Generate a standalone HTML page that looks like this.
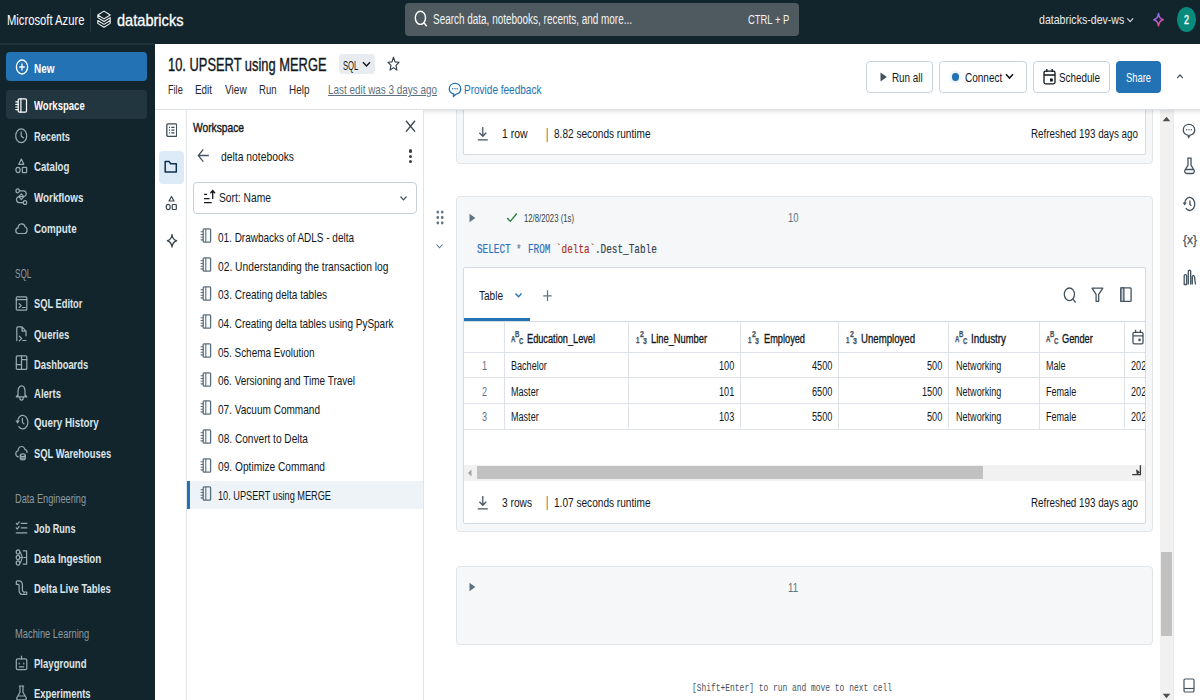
<!DOCTYPE html>
<html lang="en"><head><meta charset="utf-8"><title>10. UPSERT using MERGE - Databricks</title>
<style>
html,body{margin:0;padding:0}
body{width:1200px;height:700px;overflow:hidden;position:relative;background:#fff;font-family:"Liberation Sans",sans-serif}
.b{position:absolute;box-sizing:border-box;display:block}
.t{position:absolute;white-space:nowrap;line-height:1;transform-origin:0 0;display:block}
</style></head><body>
<div class="b" style="left:0px;top:0px;width:1200px;height:44px;background:#12252d;"></div>
<div class="b" style="left:0px;top:44px;width:155px;height:656px;background:#12252d;"></div>
<div class="b" style="left:0px;top:43.4px;width:155px;height:1.2px;background:#203239;"></div>
<span class="t" style="left:7.00px;top:11.68px;font-size:15.5px;transform:scaleX(0.7256);color:#fff;">Microsoft Azure</span>
<div class="b" style="left:89.6px;top:7.5px;width:1.2px;height:24.5px;background:#283940;"></div>
<svg class="b" style="left:97.4px;top:9.9px;" width="14" height="19.6" viewBox="0 0 14 19.6" fill="none"><path d="M.8 5 7 1.1l6.2 3.9L7 8.9zM.8 5v2.6L7 11.5l6.2-3.9v2.9L7 14.4.8 10.5v2.9L7 17.3l6.2-3.9v-2.8" stroke="#eef1f3" stroke-width="1.1" stroke-linejoin="round"/></svg>
<span class="t" style="left:117.10px;top:11.61px;font-size:17px;transform:scaleX(0.8583);color:#fff;-webkit-text-stroke:0.3px #fff;">databricks</span>
<div class="b" style="left:405px;top:3px;width:393.5px;height:33px;background:#4e5a60;border-radius:4px;"></div>
<svg class="b" style="left:414px;top:9.5px;" width="14" height="18" viewBox="0 0 14 18" fill="none"><ellipse cx="6.4" cy="7.8" rx="5.1" ry="6.6" stroke="#fff" stroke-width="1.4"/><path d="M10 12.8 12.7 16.3" stroke="#fff" stroke-width="1.4"/></svg>
<span class="t" style="left:432.70px;top:12.15px;font-size:14px;transform:scaleX(0.7103);color:#f2f4f5;">Search data, notebooks, recents, and more...</span>
<span class="t" style="left:747.70px;top:12.87px;font-size:13.5px;transform:scaleX(0.6983);color:#f2f4f5;">CTRL + P</span>
<span class="t" style="left:1038.70px;top:13.00px;font-size:13px;transform:scaleX(0.8143);color:#e8ecef;">databricks-dev-ws</span>
<svg class="b" style="left:1126px;top:17px;" width="8" height="7" viewBox="0 0 8 7" fill="none"><path d="M1.3 1.3 4.2 4.6 7.1 1.3" stroke="#d5dce0" stroke-width="1.2"/></svg>
<svg class="b" style="left:1152px;top:12px;" width="13" height="16" viewBox="0 0 13 16" fill="none"><defs><linearGradient id="sg" x1="0.2" y1="0" x2=".8" y2="1"><stop offset="0" stop-color="#6d86f2"/><stop offset=".5" stop-color="#c14fd6"/><stop offset="1" stop-color="#f5525f"/></linearGradient></defs><path d="M6.5 1.6C7 5.3 8.2 6.9 11.2 7.7 8.2 8.5 7 10.1 6.5 13.8 6 10.1 4.8 8.5 1.8 7.7 4.8 6.9 6 5.3 6.5 1.6z" stroke="url(#sg)" stroke-width="1.5" stroke-linejoin="round"/></svg>
<div class="b" style="left:1176.8px;top:7.1px;width:19.5px;height:25px;background:#088b7d;border-radius:50%"></div>
<span class="t" style="left:1184.20px;top:13.52px;font-size:12.5px;transform:scaleX(0.7193);color:#fff;-webkit-text-stroke:0.4px #fff;">2</span>
<div class="b" style="left:6px;top:52px;width:141px;height:29px;background:#2272b4;border-radius:4px;"></div>
<svg class="b" style="left:15px;top:59px;" width="14" height="16" viewBox="0 0 14 16" fill="none"><ellipse cx="7" cy="8" rx="5.6" ry="7" stroke="#fff" stroke-width="1.3"/><path d="M7 4.6v6.8M4.2 8h5.6" stroke="#fff" stroke-width="1.3"/></svg>
<span class="t" style="left:33.70px;top:62.00px;font-size:13px;transform:scaleX(0.7669);color:#fff;font-weight:bold;">New</span>
<div class="b" style="left:6px;top:90px;width:141px;height:29px;background:#22363f;border-radius:4px;"></div>
<span class="t" style="left:33.80px;top:98.80px;font-size:13px;transform:scaleX(0.7335);color:#fff;font-weight:bold;">Workspace</span>
<span class="t" style="left:33.80px;top:129.70px;font-size:13px;transform:scaleX(0.7118);color:#dde4e8;font-weight:bold;">Recents</span>
<span class="t" style="left:33.80px;top:160.30px;font-size:13px;transform:scaleX(0.7426);color:#dde4e8;font-weight:bold;">Catalog</span>
<span class="t" style="left:33.80px;top:190.80px;font-size:13px;transform:scaleX(0.7543);color:#dde4e8;font-weight:bold;">Workflows</span>
<span class="t" style="left:33.80px;top:221.70px;font-size:13px;transform:scaleX(0.7563);color:#dde4e8;font-weight:bold;">Compute</span>
<span class="t" style="left:33.80px;top:297.30px;font-size:13px;transform:scaleX(0.7154);color:#dde4e8;font-weight:bold;">SQL Editor</span>
<span class="t" style="left:33.80px;top:327.80px;font-size:13px;transform:scaleX(0.7271);color:#dde4e8;font-weight:bold;">Queries</span>
<span class="t" style="left:33.80px;top:357.50px;font-size:13px;transform:scaleX(0.7214);color:#dde4e8;font-weight:bold;">Dashboards</span>
<span class="t" style="left:33.80px;top:387.00px;font-size:13px;transform:scaleX(0.7327);color:#dde4e8;font-weight:bold;">Alerts</span>
<span class="t" style="left:33.80px;top:416.10px;font-size:13px;transform:scaleX(0.7537);color:#dde4e8;font-weight:bold;">Query History</span>
<span class="t" style="left:33.80px;top:447.00px;font-size:13px;transform:scaleX(0.7220);color:#dde4e8;font-weight:bold;">SQL Warehouses</span>
<span class="t" style="left:33.80px;top:522.10px;font-size:13px;transform:scaleX(0.7008);color:#dde4e8;font-weight:bold;">Job Runs</span>
<span class="t" style="left:33.80px;top:551.60px;font-size:13px;transform:scaleX(0.7514);color:#dde4e8;font-weight:bold;">Data Ingestion</span>
<span class="t" style="left:33.80px;top:581.70px;font-size:13px;transform:scaleX(0.7288);color:#dde4e8;font-weight:bold;">Delta Live Tables</span>
<span class="t" style="left:33.80px;top:656.50px;font-size:13px;transform:scaleX(0.7342);color:#dde4e8;font-weight:bold;">Playground</span>
<span class="t" style="left:33.80px;top:687.10px;font-size:13px;transform:scaleX(0.7254);color:#dde4e8;font-weight:bold;">Experiments</span>
<span class="t" style="left:14.80px;top:267.84px;font-size:12px;transform:scaleX(0.6830);color:#8d9aa1;">SQL</span>
<span class="t" style="left:14.80px;top:493.14px;font-size:12px;transform:scaleX(0.7657);color:#8d9aa1;">Data Engineering</span>
<span class="t" style="left:14.80px;top:628.44px;font-size:12px;transform:scaleX(0.7778);color:#8d9aa1;">Machine Learning</span>
<div class="b" style="left:155px;top:44px;width:1045px;height:66px;background:#fff;border-bottom:1px solid #dce2e8;z-index:5"></div>
<div class="b" style="left:424px;top:110px;width:776px;height:5px;background:linear-gradient(rgba(0,0,0,.10),rgba(0,0,0,.03) 60%,rgba(0,0,0,0));z-index:5"></div>
<div class="b" style="left:0;top:0;z-index:6">
<span class="t" style="left:167.50px;top:57.19px;font-size:17.5px;transform:scaleX(0.7363);color:#11171c;-webkit-text-stroke:0.35px #11171c;">10. UPSERT using MERGE</span>
<div class="b" style="left:339px;top:54px;width:36px;height:20px;background:#e8ecf0;border-radius:4px;"></div>
<span class="t" style="left:343.00px;top:59.54px;font-size:12px;transform:scaleX(0.6372);color:#11171c;">SQL</span>
<svg class="b" style="left:362px;top:61px;" width="9" height="7" viewBox="0 0 9 7" fill="none"><path d="M1 1.3 4.5 5 8 1.3" stroke="#11171c" stroke-width="1.4"/></svg>
<svg class="b" style="left:387.4px;top:56.3px;" width="13" height="15.5" viewBox="0 0 13 15.5" fill="none"><path d="M6.5 1.3 8 5.9l4 .4-3 3.1.9 4.7-3.4-2.5-3.4 2.5.9-4.7-3-3.1 4-.4z" stroke="#333f48" stroke-width="1.150" stroke-linejoin="round"/></svg>
<span class="t" style="left:167.50px;top:83.00px;font-size:13px;transform:scaleX(0.7018);color:#1f272d;">File</span>
<span class="t" style="left:195.30px;top:83.00px;font-size:13px;transform:scaleX(0.7589);color:#1f272d;">Edit</span>
<span class="t" style="left:224.80px;top:83.00px;font-size:13px;transform:scaleX(0.7766);color:#1f272d;">View</span>
<span class="t" style="left:259.00px;top:83.00px;font-size:13px;transform:scaleX(0.7338);color:#1f272d;">Run</span>
<span class="t" style="left:289.30px;top:83.00px;font-size:13px;transform:scaleX(0.7631);color:#1f272d;">Help</span>
<span class="t" style="left:328.00px;top:83.00px;font-size:13px;transform:scaleX(0.7618);color:#5f7281;text-decoration:underline;">Last edit was 3 days ago</span>
<svg class="b" style="left:447.5px;top:81.8px;" width="14" height="16" viewBox="0 0 14 16" fill="none"><path d="M7 1.3c3.3 0 5.7 2.4 5.7 5.5 0 2.8-2 5-4.7 5.4L5.4 14.6l.3-2.6C3.2 11.4 1.3 9.4 1.3 6.8c0-3.1 2.4-5.5 5.7-5.5z" stroke="#2272b4" stroke-width="1.3" stroke-linejoin="round"/><circle cx="4.7" cy="6.8" r=".75" fill="#2272b4"/><circle cx="7" cy="6.8" r=".75" fill="#2272b4"/><circle cx="9.3" cy="6.8" r=".75" fill="#2272b4"/></svg>
<span class="t" style="left:464.30px;top:83.00px;font-size:13px;transform:scaleX(0.7705);color:#2272b4;">Provide feedback</span>
<div class="b" style="left:866px;top:60.6px;width:67px;height:32.6px;background:#fff;border:1px solid #c9d3dc;border-radius:4px;"></div>
<svg class="b" style="left:880px;top:72.4px;" width="8" height="10" viewBox="0 0 8 10" fill="none"><path d="M.5.6 6.9 5 .5 9.4z" fill="#44535f"/></svg>
<span class="t" style="left:892.30px;top:70.50px;font-size:13px;transform:scaleX(0.7587);color:#11171c;">Run all</span>
<div class="b" style="left:939px;top:60.6px;width:88px;height:32.6px;background:#fff;border:1px solid #c9d3dc;border-radius:4px;"></div>
<div class="b" style="left:952.4px;top:73.4px;width:6.4px;height:7.3px;background:#2272b4;border-radius:50%;box-shadow:0 0 0 2.5px #f0f5fa"></div>
<span class="t" style="left:965.20px;top:70.50px;font-size:13px;transform:scaleX(0.7704);color:#11171c;">Connect</span>
<svg class="b" style="left:1005px;top:73px;" width="9" height="7" viewBox="0 0 9 7" fill="none"><path d="M1 1.3 4.5 5 8 1.3" stroke="#11171c" stroke-width="1.6"/></svg>
<div class="b" style="left:1033px;top:60.6px;width:77px;height:32.6px;background:#fff;border:1px solid #c9d3dc;border-radius:4px;"></div>
<svg class="b" style="left:1043px;top:68px;" width="13" height="17" viewBox="0 0 13 17" fill="none"><rect x="1" y="3.2" width="11" height="12.6" rx="1.5" stroke="#11171c" stroke-width="1.3"/><path d="M1 7h11M3.8 1v3M9.2 1v3" stroke="#11171c" stroke-width="1.3"/><rect x="7" y="10.5" width="2.8" height="3" fill="#11171c"/></svg>
<span class="t" style="left:1059.00px;top:70.50px;font-size:13px;transform:scaleX(0.7564);color:#11171c;">Schedule</span>
<div class="b" style="left:1116.2px;top:60.6px;width:45px;height:32.6px;background:#2272b4;border-radius:4px;"></div>
<span class="t" style="left:1126.00px;top:70.50px;font-size:13px;transform:scaleX(0.7207);color:#fff;">Share</span>
<svg class="b" style="left:1175px;top:73px;" width="10" height="7" viewBox="0 0 10 7" fill="none"><path d="M2.2 5.2 5 2 7.8 5.2" stroke="#44535f" stroke-width="1.2"/></svg>
</div>
<div class="b" style="left:186.2px;top:109px;width:1px;height:591px;background:#dfe4e8;"></div>
<div class="b" style="left:159px;top:150.5px;width:24.5px;height:33px;background:#dcebf7;border-radius:4px;"></div>
<svg class="b" style="left:165.5px;top:123.2px;" width="11.5" height="14.2" viewBox="0 0 11.5 14.2" fill="none"><rect x=".8" y=".8" width="9.9" height="12.6" rx="1.3" stroke="#3c4a54" stroke-width="1.3"/><path d="M3 4.3h1M3 7.1h1M3 9.9h1M5.3 4.3h3.2M5.3 7.1h3.2M5.3 9.9h3.2" stroke="#3c4a54" stroke-width="1.2"/></svg>
<svg class="b" style="left:164.3px;top:159.8px;" width="13.5" height="13.5" viewBox="0 0 13.5 13.5" fill="none"><path d="M1.2 1.6h4l1.5 2.1h5.6v8.4h-11.1z" stroke="#0e2f4d" stroke-width="1.5" stroke-linejoin="round"/></svg>
<svg class="b" style="left:165px;top:195px;" width="13" height="17" viewBox="0 0 13 17" fill="none"><path d="M6.5 1.5 9 6H4z" stroke="#3c4a54" stroke-width="1.2" stroke-linejoin="round"/><ellipse cx="3.2" cy="12" rx="2" ry="2.6" stroke="#3c4a54" stroke-width="1.2"/><rect x="7.3" y="9.5" width="4" height="5" rx=".5" stroke="#3c4a54" stroke-width="1.2"/></svg>
<svg class="b" style="left:165.5px;top:232.5px;" width="12" height="15.5" viewBox="0 0 12 15.5" fill="none"><path d="M6 1.5C6.5 5.3 7.6 6.9 10.6 7.750 7.6 8.6 6.5 10.2 6 14 5.5 10.2 4.4 8.6 1.4 7.750 4.4 6.9 5.5 5.3 6 1.5z" stroke="#3c4a54" stroke-width="1.3" stroke-linejoin="round"/></svg>
<div class="b" style="left:423px;top:109px;width:1px;height:591px;background:#dfe4e8;"></div>
<span class="t" style="left:193.00px;top:121.00px;font-size:13px;transform:scaleX(0.7872);color:#11171c;-webkit-text-stroke:0.4px #11171c;">Workspace</span>
<svg class="b" style="left:405px;top:119.8px;" width="11" height="12.5" viewBox="0 0 11 12.5" fill="none"><path d="M1 .8 10 11.7M10 .8 1 11.7" stroke="#3b4852" stroke-width="1.350"/></svg>
<svg class="b" style="left:196.5px;top:148.3px;" width="12.5" height="15" viewBox="0 0 12.5 15" fill="none"><path d="M11.8 7.5H1.3M6.3 1.3 1.3 7.5l5 6.2" stroke="#44535f" stroke-width="1.3"/></svg>
<span class="t" style="left:221.00px;top:150.00px;font-size:13px;transform:scaleX(0.7953);color:#11171c;">delta notebooks</span>
<div class="b" style="left:408.5px;top:149.3px;width:3px;height:3.4px;background:#333f48;border-radius:2px;"></div>
<div class="b" style="left:408.5px;top:154.5px;width:3px;height:3.4px;background:#333f48;border-radius:2px;"></div>
<div class="b" style="left:408.5px;top:159.7px;width:3px;height:3.4px;background:#333f48;border-radius:2px;"></div>
<div class="b" style="left:193px;top:182px;width:224px;height:32.3px;background:#fff;border:1px solid #c5d0d9;border-radius:4px;"></div>
<svg class="b" style="left:203px;top:189px;" width="13" height="15" viewBox="0 0 13 15" fill="none"><path d="M1.1 5.4h3M1.1 9.6h5.5M1.1 13.7h7.6" stroke="#11171c" stroke-width="1.3"/><path d="M9.7 9.9V1.8M7.4 4.2 9.7 1.6l2.3 2.6" stroke="#11171c" stroke-width="1.3"/></svg>
<span class="t" style="left:218.90px;top:191.17px;font-size:13.5px;transform:scaleX(0.7617);color:#11171c;">Sort: Name</span>
<svg class="b" style="left:399px;top:195px;" width="9" height="7" viewBox="0 0 9 7" fill="none"><path d="M1.5 1.5 4.5 4.8 7.5 1.5" stroke="#44535f" stroke-width="1.2"/></svg>
<div class="b" style="left:187px;top:480.6px;width:236px;height:28.8px;background:#eef3f8;"></div>
<div class="b" style="left:187px;top:480.6px;width:2.5px;height:28.8px;background:#2272b4;"></div>
<svg class="b" style="left:200.2px;top:228.3px;" width="11.4" height="15" viewBox="0 0 11.4 15" fill="none"><rect x="3.2" y=".9" width="7.4" height="13.2" rx=".9" stroke="#586d7e" stroke-width="1.3"/><path d="M5.8 1v13" stroke="#586d7e" stroke-width="1.1"/><path d="M.6 3.8h2.6M.6 6.5h2.6M.6 9.2h2.6M.6 11.9h2.6" stroke="#586d7e" stroke-width="1.1"/></svg>
<span class="t" style="left:217.90px;top:231.00px;font-size:13px;transform:scaleX(0.7682);color:#11171c;">01. Drawbacks of ADLS - delta</span>
<svg class="b" style="left:200.2px;top:256.95px;" width="11.4" height="15" viewBox="0 0 11.4 15" fill="none"><rect x="3.2" y=".9" width="7.4" height="13.2" rx=".9" stroke="#586d7e" stroke-width="1.3"/><path d="M5.8 1v13" stroke="#586d7e" stroke-width="1.1"/><path d="M.6 3.8h2.6M.6 6.5h2.6M.6 9.2h2.6M.6 11.9h2.6" stroke="#586d7e" stroke-width="1.1"/></svg>
<span class="t" style="left:217.90px;top:259.65px;font-size:13px;transform:scaleX(0.7890);color:#11171c;">02. Understanding the transaction log</span>
<svg class="b" style="left:200.2px;top:285.6px;" width="11.4" height="15" viewBox="0 0 11.4 15" fill="none"><rect x="3.2" y=".9" width="7.4" height="13.2" rx=".9" stroke="#586d7e" stroke-width="1.3"/><path d="M5.8 1v13" stroke="#586d7e" stroke-width="1.1"/><path d="M.6 3.8h2.6M.6 6.5h2.6M.6 9.2h2.6M.6 11.9h2.6" stroke="#586d7e" stroke-width="1.1"/></svg>
<span class="t" style="left:217.90px;top:288.30px;font-size:13px;transform:scaleX(0.7735);color:#11171c;">03. Creating delta tables</span>
<svg class="b" style="left:200.2px;top:314.25px;" width="11.4" height="15" viewBox="0 0 11.4 15" fill="none"><rect x="3.2" y=".9" width="7.4" height="13.2" rx=".9" stroke="#586d7e" stroke-width="1.3"/><path d="M5.8 1v13" stroke="#586d7e" stroke-width="1.1"/><path d="M.6 3.8h2.6M.6 6.5h2.6M.6 9.2h2.6M.6 11.9h2.6" stroke="#586d7e" stroke-width="1.1"/></svg>
<span class="t" style="left:217.90px;top:316.95px;font-size:13px;transform:scaleX(0.7685);color:#11171c;">04. Creating delta tables using PySpark</span>
<svg class="b" style="left:200.2px;top:342.90000000000003px;" width="11.4" height="15" viewBox="0 0 11.4 15" fill="none"><rect x="3.2" y=".9" width="7.4" height="13.2" rx=".9" stroke="#586d7e" stroke-width="1.3"/><path d="M5.8 1v13" stroke="#586d7e" stroke-width="1.1"/><path d="M.6 3.8h2.6M.6 6.5h2.6M.6 9.2h2.6M.6 11.9h2.6" stroke="#586d7e" stroke-width="1.1"/></svg>
<span class="t" style="left:217.90px;top:345.60px;font-size:13px;transform:scaleX(0.7631);color:#11171c;">05. Schema Evolution</span>
<svg class="b" style="left:200.2px;top:371.55px;" width="11.4" height="15" viewBox="0 0 11.4 15" fill="none"><rect x="3.2" y=".9" width="7.4" height="13.2" rx=".9" stroke="#586d7e" stroke-width="1.3"/><path d="M5.8 1v13" stroke="#586d7e" stroke-width="1.1"/><path d="M.6 3.8h2.6M.6 6.5h2.6M.6 9.2h2.6M.6 11.9h2.6" stroke="#586d7e" stroke-width="1.1"/></svg>
<span class="t" style="left:217.90px;top:374.25px;font-size:13px;transform:scaleX(0.7676);color:#11171c;">06. Versioning and Time Travel</span>
<svg class="b" style="left:200.2px;top:400.2px;" width="11.4" height="15" viewBox="0 0 11.4 15" fill="none"><rect x="3.2" y=".9" width="7.4" height="13.2" rx=".9" stroke="#586d7e" stroke-width="1.3"/><path d="M5.8 1v13" stroke="#586d7e" stroke-width="1.1"/><path d="M.6 3.8h2.6M.6 6.5h2.6M.6 9.2h2.6M.6 11.9h2.6" stroke="#586d7e" stroke-width="1.1"/></svg>
<span class="t" style="left:217.90px;top:402.90px;font-size:13px;transform:scaleX(0.7728);color:#11171c;">07. Vacuum Command</span>
<svg class="b" style="left:200.2px;top:428.84999999999997px;" width="11.4" height="15" viewBox="0 0 11.4 15" fill="none"><rect x="3.2" y=".9" width="7.4" height="13.2" rx=".9" stroke="#586d7e" stroke-width="1.3"/><path d="M5.8 1v13" stroke="#586d7e" stroke-width="1.1"/><path d="M.6 3.8h2.6M.6 6.5h2.6M.6 9.2h2.6M.6 11.9h2.6" stroke="#586d7e" stroke-width="1.1"/></svg>
<span class="t" style="left:217.90px;top:431.55px;font-size:13px;transform:scaleX(0.7784);color:#11171c;">08. Convert to Delta</span>
<svg class="b" style="left:200.2px;top:457.5px;" width="11.4" height="15" viewBox="0 0 11.4 15" fill="none"><rect x="3.2" y=".9" width="7.4" height="13.2" rx=".9" stroke="#586d7e" stroke-width="1.3"/><path d="M5.8 1v13" stroke="#586d7e" stroke-width="1.1"/><path d="M.6 3.8h2.6M.6 6.5h2.6M.6 9.2h2.6M.6 11.9h2.6" stroke="#586d7e" stroke-width="1.1"/></svg>
<span class="t" style="left:217.90px;top:460.20px;font-size:13px;transform:scaleX(0.7836);color:#11171c;">09. Optimize Command</span>
<svg class="b" style="left:200.2px;top:486.15px;" width="11.4" height="15" viewBox="0 0 11.4 15" fill="none"><rect x="3.2" y=".9" width="7.4" height="13.2" rx=".9" stroke="#586d7e" stroke-width="1.3"/><path d="M5.8 1v13" stroke="#586d7e" stroke-width="1.1"/><path d="M.6 3.8h2.6M.6 6.5h2.6M.6 9.2h2.6M.6 11.9h2.6" stroke="#586d7e" stroke-width="1.1"/></svg>
<span class="t" style="left:217.90px;top:488.85px;font-size:13px;transform:scaleX(0.7066);color:#11171c;">10. UPSERT using MERGE</span>
<div class="b" style="left:455.5px;top:100px;width:697px;height:63.8px;background:#f6f7f9;border:1px solid #e0e5ea;border-radius:4px;"></div>
<div class="b" style="left:462.5px;top:100px;width:683px;height:54.8px;background:#fff;border:1px solid #d4dbe2;border-radius:2px;"></div>
<svg class="b" style="left:477px;top:126.3px;" width="12" height="15" viewBox="0 0 12 15" fill="none"><path d="M5.8 1v9M2.4 6.7 5.8 10.3 9.2 6.7M.8 13.8h10" stroke="#44535f" stroke-width="1.250"/></svg>
<span class="t" style="left:502.00px;top:128.42px;font-size:12.5px;transform:scaleX(0.8343);color:#11171c;">1 row</span>
<span class="t" style="left:545.60px;top:126.08px;font-size:15.5px;transform:scaleX(0.5464);color:#333f48;">|</span>
<span class="t" style="left:554.00px;top:128.42px;font-size:12.5px;transform:scaleX(0.8075);color:#11171c;">8.82 seconds runtime</span>
<span class="t" style="left:1031.00px;top:128.42px;font-size:12.5px;transform:scaleX(0.7856);color:#11171c;">Refreshed 193 days ago</span>
<div class="b" style="left:455.5px;top:196.3px;width:697px;height:336.2px;background:#f6f7f9;border:1px solid #e0e5ea;border-radius:4px;"></div>
<svg class="b" style="left:435.7px;top:210.3px;" width="8" height="15" viewBox="0 0 8 15" fill="none"><g fill="#5f7281"><ellipse cx="1.8" cy="2" rx="1.3" ry="1.6"/><ellipse cx="6.2" cy="2" rx="1.3" ry="1.6"/><ellipse cx="1.8" cy="7.4" rx="1.3" ry="1.6"/><ellipse cx="6.2" cy="7.4" rx="1.3" ry="1.6"/><ellipse cx="1.8" cy="12.8" rx="1.3" ry="1.6"/><ellipse cx="6.2" cy="12.8" rx="1.3" ry="1.6"/></g></svg>
<svg class="b" style="left:435px;top:243px;" width="9" height="7" viewBox="0 0 9 7" fill="none"><path d="M1.5 1.5 4.5 4.8 7.5 1.5" stroke="#5f7281" stroke-width="1.1"/></svg>
<svg class="b" style="left:469px;top:213px;" width="7" height="10" viewBox="0 0 7 10" fill="none"><path d="M.5.8 6.3 5 .5 9.2z" fill="#5f7281"/></svg>
<svg class="b" style="left:506px;top:212px;" width="12" height="11" viewBox="0 0 12 11" fill="none"><path d="M1.2 6 4.3 9.3 10.8 1.5" stroke="#277c43" stroke-width="1.3"/></svg>
<span class="t" style="left:524.00px;top:213.53px;font-size:10px;transform:scaleX(0.7754);color:#333f48;">12/8/2023 (1s)</span>
<span class="t" style="left:788.00px;top:212.42px;font-size:12.5px;transform:scaleX(0.7552);color:#5f7281;">10</span>
<span class="t" style="left:477.00px;top:242.53px;font-size:13px;transform:scaleX(0.7210);color:#2f6fc0;font-family:'Liberation Mono',monospace;-webkit-text-stroke:0.2px #2f6fc0;">SELECT</span>
<span class="t" style="left:516.38px;top:242.53px;font-size:13px;transform:scaleX(0.7210);color:#6b7d8a;font-family:'Liberation Mono',monospace;-webkit-text-stroke:0.2px #6b7d8a;">*</span>
<span class="t" style="left:527.62px;top:242.53px;font-size:13px;transform:scaleX(0.7210);color:#2f6fc0;font-family:'Liberation Mono',monospace;-webkit-text-stroke:0.2px #2f6fc0;">FROM</span>
<span class="t" style="left:555.75px;top:242.53px;font-size:13px;transform:scaleX(0.7210);color:#b03329;font-family:'Liberation Mono',monospace;-webkit-text-stroke:0.2px #b03329;">`delta`</span>
<span class="t" style="left:595.12px;top:242.53px;font-size:13px;transform:scaleX(0.7210);color:#34434e;font-family:'Liberation Mono',monospace;-webkit-text-stroke:0.2px #34434e;">.Dest_Table</span>
<div class="b" style="left:462.5px;top:267px;width:683px;height:256.5px;background:#fff;border:1px solid #d4dbe2;border-radius:2px;"></div>
<span class="t" style="left:478.80px;top:289.30px;font-size:13px;transform:scaleX(0.7723);color:#11171c;">Table</span>
<svg class="b" style="left:514px;top:291.5px;" width="9" height="7" viewBox="0 0 9 7" fill="none"><path d="M1.5 1.5 4.5 4.8 7.5 1.5" stroke="#2272b4" stroke-width="1.3"/></svg>
<svg class="b" style="left:542.5px;top:289.5px;" width="9" height="11.5" viewBox="0 0 9 11.5" fill="none"><path d="M4.5 .3v11M.3 5.8h8.4" stroke="#5f7281" stroke-width="1.2"/></svg>
<div class="b" style="left:463.5px;top:318px;width:66.5px;height:3.5px;background:#2272b4;"></div>
<div class="b" style="left:463.5px;top:321.2px;width:681px;height:1px;background:#d4dbe2;"></div>
<svg class="b" style="left:1062.5px;top:286.7px;" width="14" height="16.5" viewBox="0 0 14 16.5" fill="none"><ellipse cx="6.4" cy="7.3" rx="5.1" ry="6.3" stroke="#44535f" stroke-width="1.3"/><path d="M10 12.2 12.6 15.5" stroke="#44535f" stroke-width="1.3"/></svg>
<svg class="b" style="left:1091px;top:287px;" width="13" height="15.5" viewBox="0 0 13 15.5" fill="none"><path d="M1 1.2h10.8L7.7 7.3v7H5.1v-7z" stroke="#44535f" stroke-width="1.3" stroke-linejoin="round"/></svg>
<svg class="b" style="left:1119.7px;top:287px;" width="12" height="15.5" viewBox="0 0 12 15.5" fill="none"><rect x=".9" y=".9" width="10.2" height="13.5" rx="1" stroke="#44535f" stroke-width="1.3"/><rect x=".9" y=".9" width="3" height="13.5" fill="#c9d1d8" stroke="#44535f" stroke-width="1.3"/></svg>
<div class="b" style="left:504.0px;top:322px;width:1px;height:107.5px;background:#dde3e9;"></div>
<div class="b" style="left:628.0px;top:322px;width:1px;height:107.5px;background:#dde3e9;"></div>
<div class="b" style="left:740.3px;top:322px;width:1px;height:107.5px;background:#dde3e9;"></div>
<div class="b" style="left:837.8px;top:322px;width:1px;height:107.5px;background:#dde3e9;"></div>
<div class="b" style="left:948.2px;top:322px;width:1px;height:107.5px;background:#dde3e9;"></div>
<div class="b" style="left:1038.8px;top:322px;width:1px;height:107.5px;background:#dde3e9;"></div>
<div class="b" style="left:1123.8px;top:322px;width:1px;height:107.5px;background:#dde3e9;"></div>
<div class="b" style="left:463.5px;top:351.8px;width:681px;height:1px;background:#dde3e9;"></div>
<div class="b" style="left:463.5px;top:377.2px;width:681px;height:1px;background:#dde3e9;"></div>
<div class="b" style="left:463.5px;top:402.8px;width:681px;height:1px;background:#dde3e9;"></div>
<div class="b" style="left:463.5px;top:428.5px;width:681px;height:1px;background:#dde3e9;"></div>
<span class="t" style="left:511.00px;top:335.00px;font-size:8.5px;transform:scaleX(0.7167);color:#44535f;font-weight:bold;-webkit-text-stroke:0.25px #44535f;">A</span>
<span class="t" style="left:515.00px;top:330.08px;font-size:9px;transform:scaleX(0.6769);color:#44535f;font-weight:bold;-webkit-text-stroke:0.25px #44535f;">B</span>
<span class="t" style="left:518.70px;top:336.58px;font-size:9px;transform:scaleX(0.6769);color:#44535f;font-weight:bold;-webkit-text-stroke:0.25px #44535f;">C</span>
<span class="t" style="left:527.00px;top:332.84px;font-size:12px;transform:scaleX(0.7664);color:#11171c;-webkit-text-stroke:0.3px #11171c;">Education_Level</span>
<span class="t" style="left:636.00px;top:335.80px;font-size:8.5px;transform:scaleX(0.7193);color:#44535f;font-weight:bold;-webkit-text-stroke:0.25px #44535f;">1</span>
<span class="t" style="left:639.90px;top:330.38px;font-size:9px;transform:scaleX(0.7793);color:#44535f;font-weight:bold;-webkit-text-stroke:0.25px #44535f;">2</span>
<span class="t" style="left:643.40px;top:337.38px;font-size:9px;transform:scaleX(0.7793);color:#44535f;font-weight:bold;-webkit-text-stroke:0.25px #44535f;">3</span>
<span class="t" style="left:651.00px;top:332.84px;font-size:12px;transform:scaleX(0.7774);color:#11171c;-webkit-text-stroke:0.3px #11171c;">Line_Number</span>
<span class="t" style="left:748.00px;top:335.80px;font-size:8.5px;transform:scaleX(0.7193);color:#44535f;font-weight:bold;-webkit-text-stroke:0.25px #44535f;">1</span>
<span class="t" style="left:751.90px;top:330.38px;font-size:9px;transform:scaleX(0.7793);color:#44535f;font-weight:bold;-webkit-text-stroke:0.25px #44535f;">2</span>
<span class="t" style="left:755.40px;top:337.38px;font-size:9px;transform:scaleX(0.7793);color:#44535f;font-weight:bold;-webkit-text-stroke:0.25px #44535f;">3</span>
<span class="t" style="left:764.00px;top:332.84px;font-size:12px;transform:scaleX(0.7684);color:#11171c;-webkit-text-stroke:0.3px #11171c;">Employed</span>
<span class="t" style="left:846.00px;top:335.80px;font-size:8.5px;transform:scaleX(0.7193);color:#44535f;font-weight:bold;-webkit-text-stroke:0.25px #44535f;">1</span>
<span class="t" style="left:849.90px;top:330.38px;font-size:9px;transform:scaleX(0.7793);color:#44535f;font-weight:bold;-webkit-text-stroke:0.25px #44535f;">2</span>
<span class="t" style="left:853.40px;top:337.38px;font-size:9px;transform:scaleX(0.7793);color:#44535f;font-weight:bold;-webkit-text-stroke:0.25px #44535f;">3</span>
<span class="t" style="left:861.40px;top:332.84px;font-size:12px;transform:scaleX(0.8016);color:#11171c;-webkit-text-stroke:0.3px #11171c;">Unemployed</span>
<span class="t" style="left:955.40px;top:335.00px;font-size:8.5px;transform:scaleX(0.7167);color:#44535f;font-weight:bold;-webkit-text-stroke:0.25px #44535f;">A</span>
<span class="t" style="left:959.40px;top:330.08px;font-size:9px;transform:scaleX(0.6769);color:#44535f;font-weight:bold;-webkit-text-stroke:0.25px #44535f;">B</span>
<span class="t" style="left:963.10px;top:336.58px;font-size:9px;transform:scaleX(0.6769);color:#44535f;font-weight:bold;-webkit-text-stroke:0.25px #44535f;">C</span>
<span class="t" style="left:971.40px;top:332.84px;font-size:12px;transform:scaleX(0.8199);color:#11171c;-webkit-text-stroke:0.3px #11171c;">Industry</span>
<span class="t" style="left:1046.00px;top:335.00px;font-size:8.5px;transform:scaleX(0.7167);color:#44535f;font-weight:bold;-webkit-text-stroke:0.25px #44535f;">A</span>
<span class="t" style="left:1050.00px;top:330.08px;font-size:9px;transform:scaleX(0.6769);color:#44535f;font-weight:bold;-webkit-text-stroke:0.25px #44535f;">B</span>
<span class="t" style="left:1053.70px;top:336.58px;font-size:9px;transform:scaleX(0.6769);color:#44535f;font-weight:bold;-webkit-text-stroke:0.25px #44535f;">C</span>
<span class="t" style="left:1062.00px;top:332.84px;font-size:12px;transform:scaleX(0.7695);color:#11171c;-webkit-text-stroke:0.3px #11171c;">Gender</span>
<svg class="b" style="left:1131.7px;top:329px;" width="12" height="16" viewBox="0 0 12 16" fill="none"><rect x="1" y="3.3" width="10" height="11.5" rx="1.2" stroke="#44535f" stroke-width="1.3"/><path d="M1 6.8h10M3.6 .7v3M8.4 .7v3" stroke="#44535f" stroke-width="1.3"/><rect x="6.4" y="9.6" width="2.3" height="2.5" fill="#44535f"/></svg>
<span class="t" style="left:481.80px;top:359.84px;font-size:12px;transform:scaleX(0.7600);color:#5f7281;">1</span>
<span class="t" style="left:511.00px;top:359.84px;font-size:12px;transform:scaleX(0.7550);color:#11171c;">Bachelor</span>
<span class="t" style="left:719.28px;top:359.84px;font-size:12px;transform:scaleX(0.7600);color:#11171c;">100</span>
<span class="t" style="left:811.71px;top:359.84px;font-size:12px;transform:scaleX(0.7600);color:#11171c;">4500</span>
<span class="t" style="left:927.28px;top:359.84px;font-size:12px;transform:scaleX(0.7600);color:#11171c;">500</span>
<span class="t" style="left:955.50px;top:359.84px;font-size:12px;transform:scaleX(0.7550);color:#11171c;">Networking</span>
<span class="t" style="left:1046.00px;top:359.84px;font-size:12px;transform:scaleX(0.7550);color:#11171c;">Male</span>
<div class="b" style="left:1131.2px;top:359.0px;width:13.6px;height:14px;overflow:hidden">
<span class="t" style="left:0.00px;top:0.84px;font-size:12px;transform:scaleX(0.7600);color:#11171c;">2023</span>
</div>
<span class="t" style="left:481.80px;top:385.54px;font-size:12px;transform:scaleX(0.7600);color:#5f7281;">2</span>
<span class="t" style="left:511.00px;top:385.54px;font-size:12px;transform:scaleX(0.7550);color:#11171c;">Master</span>
<span class="t" style="left:719.28px;top:385.54px;font-size:12px;transform:scaleX(0.7600);color:#11171c;">101</span>
<span class="t" style="left:811.71px;top:385.54px;font-size:12px;transform:scaleX(0.7600);color:#11171c;">6500</span>
<span class="t" style="left:922.21px;top:385.54px;font-size:12px;transform:scaleX(0.7600);color:#11171c;">1500</span>
<span class="t" style="left:955.50px;top:385.54px;font-size:12px;transform:scaleX(0.7550);color:#11171c;">Networking</span>
<span class="t" style="left:1046.00px;top:385.54px;font-size:12px;transform:scaleX(0.7550);color:#11171c;">Female</span>
<div class="b" style="left:1131.2px;top:384.7px;width:13.6px;height:14px;overflow:hidden">
<span class="t" style="left:0.00px;top:0.84px;font-size:12px;transform:scaleX(0.7600);color:#11171c;">2023</span>
</div>
<span class="t" style="left:481.80px;top:411.24px;font-size:12px;transform:scaleX(0.7600);color:#5f7281;">3</span>
<span class="t" style="left:511.00px;top:411.24px;font-size:12px;transform:scaleX(0.7550);color:#11171c;">Master</span>
<span class="t" style="left:719.28px;top:411.24px;font-size:12px;transform:scaleX(0.7600);color:#11171c;">103</span>
<span class="t" style="left:811.71px;top:411.24px;font-size:12px;transform:scaleX(0.7600);color:#11171c;">5500</span>
<span class="t" style="left:927.28px;top:411.24px;font-size:12px;transform:scaleX(0.7600);color:#11171c;">500</span>
<span class="t" style="left:955.50px;top:411.24px;font-size:12px;transform:scaleX(0.7550);color:#11171c;">Networking</span>
<span class="t" style="left:1046.00px;top:411.24px;font-size:12px;transform:scaleX(0.7550);color:#11171c;">Female</span>
<div class="b" style="left:1131.2px;top:410.4px;width:13.6px;height:14px;overflow:hidden">
<span class="t" style="left:0.00px;top:0.84px;font-size:12px;transform:scaleX(0.7600);color:#11171c;">2023</span>
</div>
<div class="b" style="left:463.5px;top:464.5px;width:681px;height:16.3px;background:#f1f1f1;"></div>
<div class="b" style="left:477px;top:466px;width:506px;height:13.3px;background:#c1c1c1;"></div>
<svg class="b" style="left:467px;top:469px;" width="5" height="8" viewBox="0 0 5 8" fill="none"><path d="M4.5 .5v7L.8 4z" fill="#a3a3a3"/></svg>
<svg class="b" style="left:1131px;top:464px;" width="11" height="12" viewBox="0 0 11 12" fill="none"><path d="M9.4 1.2v9.4H1.2" stroke="#3a3a3a" stroke-width="1.3"/><path d="M5 5.2 9.2 8.3 5.8 10.8z" fill="#3a3a3a"/></svg>
<svg class="b" style="left:477px;top:494.6px;" width="12" height="15" viewBox="0 0 12 15" fill="none"><path d="M5.8 1v9M2.4 6.7 5.8 10.3 9.2 6.7M.8 13.8h10" stroke="#44535f" stroke-width="1.250"/></svg>
<span class="t" style="left:502.00px;top:496.72px;font-size:12.5px;transform:scaleX(0.8149);color:#11171c;">3 rows</span>
<span class="t" style="left:545.60px;top:494.38px;font-size:15.5px;transform:scaleX(0.5464);color:#333f48;">|</span>
<span class="t" style="left:554.00px;top:496.72px;font-size:12.5px;transform:scaleX(0.8075);color:#11171c;">1.07 seconds runtime</span>
<span class="t" style="left:1031.00px;top:496.72px;font-size:12.5px;transform:scaleX(0.7856);color:#11171c;">Refreshed 193 days ago</span>
<div class="b" style="left:455.5px;top:565.5px;width:697px;height:79px;background:#f6f7f9;border:1px solid #e0e5ea;border-radius:4px;"></div>
<svg class="b" style="left:469px;top:582px;" width="7" height="10" viewBox="0 0 7 10" fill="none"><path d="M.5.8 6.3 5 .5 9.2z" fill="#5f7281"/></svg>
<span class="t" style="left:788.00px;top:581.92px;font-size:12.5px;transform:scaleX(0.7707);color:#5f7281;">11</span>
<span class="t" style="left:691.50px;top:683.15px;font-size:10.5px;transform:scaleX(0.7557);color:#44535f;font-family:'Liberation Mono',monospace;">[Shift+Enter] to run and move to next cell</span>
<div class="b" style="left:1160px;top:109px;width:13.3px;height:591px;background:#f1f1f1;"></div>
<div class="b" style="left:1161px;top:551.5px;width:10.5px;height:84.5px;background:#c1c1c1;"></div>
<svg class="b" style="left:1162px;top:116px;" width="9" height="6" viewBox="0 0 9 6" fill="none"><path d="M4.5 .8 8.3 5.2H.7z" fill="#505050"/></svg>
<svg class="b" style="left:1162px;top:693px;" width="9" height="6" viewBox="0 0 9 6" fill="none"><path d="M4.5 5.2 8.3 .8H.7z" fill="#505050"/></svg>
<div class="b" style="left:1173px;top:109px;width:27px;height:591px;background:#fff;border-left:1px solid #e8ebee;"></div>
<svg class="b" style="left:1182.3px;top:122.5px;" width="14" height="16" viewBox="0 0 14 16" fill="none"><path d="M7 1.3c3.3 0 5.7 2.4 5.7 5.5 0 2.8-2 5-4.7 5.4L6.6 14.6l-.5-2.5C3.3 11.7 1.3 9.5 1.3 6.8c0-3.1 2.4-5.5 5.7-5.5z" stroke="#44535f" stroke-width="1.3" stroke-linejoin="round"/><circle cx="4.7" cy="6.8" r=".7" fill="#44535f"/><circle cx="7" cy="6.8" r=".7" fill="#44535f"/><circle cx="9.3" cy="6.8" r=".7" fill="#44535f"/></svg>
<svg class="b" style="left:1182.8px;top:156.8px;" width="13" height="18" viewBox="0 0 13 18" fill="none"><path d="M4.3 1.2h4.4M5 1.2v7L2 13c-.8 1.6 0 3.5 1.7 3.5h5.6c1.7 0 2.5-1.9 1.7-3.5L8 8.2v-7M2.3 12.5h8.4" stroke="#44535f" stroke-width="1.3" stroke-linejoin="round"/></svg>
<svg class="b" style="left:1182.3px;top:195.8px;" width="14.5" height="16" viewBox="0 0 14.5 16" fill="none"><path d="M2.6 7.5A5.1 6.5 0 1 1 3.8 12.2" stroke="#44535f" stroke-width="1.3"/><path d="M.6 6.5h4.2L2.7 9.5z" fill="#44535f"/><path d="M7.9 4.4v4l1.5 1.4" stroke="#44535f" stroke-width="1.3"/></svg>
<span class="t" style="left:1182.50px;top:234.22px;font-size:12.5px;transform:scaleX(0.9589);color:#44535f;-webkit-text-stroke:0.25px #44535f;">{x}</span>
<svg class="b" style="left:1182.5px;top:269px;" width="13" height="16.5" viewBox="0 0 13 16.5" fill="none"><path d="M1.2 15.5V6.5c0-1.3 2.4-1.3 2.4 0v9zM5.3 15.5V2.2c0-1.3 2.4-1.3 2.4 0v13.3M9.3 15.5V7.5c.5-1.5 2-1 2.3.5l.8 7.5" stroke="#44535f" stroke-width="1.3" stroke-linejoin="round"/></svg>
<svg class="b" style="left:1183px;top:678px;" width="12" height="15" viewBox="0 0 12 15" fill="none"><rect x="1" y="1" width="10" height="13" rx="1.3" stroke="#44535f" stroke-width="1.2"/><path d="M1 10.5h10" stroke="#44535f" stroke-width="1.2"/></svg>
<svg class="b" style="left:15px;top:98px" width="13.5" height="15" viewBox="0 0 13.5 15" fill="none" stroke="#fff" stroke-width="1.2" stroke-linejoin="round" stroke-linecap="round"><rect x="3.2" y=".9" width="8.3" height="13.2" rx="1.2"/><path d="M5.9 1v13M.8 3.8h2.4M.8 6.4h2.4M.8 9h2.4M.8 11.6h2.4"/></svg>
<svg class="b" style="left:15px;top:128px" width="13.5" height="15.5" viewBox="0 0 13.5 15.5" fill="none" stroke="#9caab2" stroke-width="1.2" stroke-linejoin="round" stroke-linecap="round"><ellipse cx="6.2" cy="7.7" rx="5.5" ry="6.9"/><path d="M6.2 3.8v4.2l2.2 1.8"/></svg>
<svg class="b" style="left:15px;top:158px" width="13.5" height="15.5" viewBox="0 0 13.5 15.5" fill="none" stroke="#9caab2" stroke-width="1.2" stroke-linejoin="round" stroke-linecap="round"><path d="M6.3 1 8.8 6.3H3.8z"/><ellipse cx="3" cy="12" rx="2.1" ry="2.6"/><rect x="7.4" y="9.4" width="4.2" height="5.2" rx=".4"/></svg>
<svg class="b" style="left:15px;top:187.5px" width="13.5" height="17.5" viewBox="0 0 13.5 17.5" fill="none" stroke="#9caab2" stroke-width="1.2" stroke-linejoin="round" stroke-linecap="round"><ellipse cx="2.7" cy="2.8" rx="1.7" ry="2"/><ellipse cx="10" cy="14.6" rx="1.7" ry="2"/><path d="M4.4 2.8h4.1c3.6 0 3.6 5.8 0 5.8H4.2c-3.6 0-3.6 6 0 6h4.1"/><path d="M6.3 5.8 8.8 8.7 6.3 11.6 3.8 8.7z"/></svg>
<svg class="b" style="left:15px;top:221px" width="13.5" height="13.5" viewBox="0 0 13.5 13.5" fill="none" stroke="#9caab2" stroke-width="1.2" stroke-linejoin="round" stroke-linecap="round"><path d="M3.4 12.5c-3.4 0-3.4-5.3-.3-5.6C3.3 1.8 9.5 1.8 10 6c3 .3 2.7 6.5-.6 6.5z"/></svg>
<svg class="b" style="left:15px;top:295.5px" width="13.5" height="15.5" viewBox="0 0 13.5 15.5" fill="none" stroke="#9caab2" stroke-width="1.2" stroke-linejoin="round" stroke-linecap="round"><rect x="1.3" y=".9" width="10.5" height="13.3" rx=".9"/><path d="M1.3 3.6h10.5M4.2 7.7l2 1.9-2 1.9M7.4 11.5h3"/></svg>
<svg class="b" style="left:15px;top:326px" width="13.5" height="15.5" viewBox="0 0 13.5 15.5" fill="none" stroke="#9caab2" stroke-width="1.2" stroke-linejoin="round" stroke-linecap="round"><path d="M1.8 14.6V2c0-.7.5-1.2 1.2-1.2h4l4 4.4v4.6M7 .8v4.4h4M4.3 10.2l2.3 2.3-2.3 2.3M7.8 14.5h3.2"/></svg>
<svg class="b" style="left:15px;top:354.7px" width="13.5" height="15.5" viewBox="0 0 13.5 15.5" fill="none" stroke="#9caab2" stroke-width="1.2" stroke-linejoin="round" stroke-linecap="round"><rect x="1.3" y=".9" width="10.5" height="13.5" rx=".9"/><path d="M6.5 .9v13.5M1.3 9.7h5.2M6.5 4.7h5.3"/></svg>
<svg class="b" style="left:15px;top:384.5px" width="13.5" height="16.5" viewBox="0 0 13.5 16.5" fill="none" stroke="#9caab2" stroke-width="1.2" stroke-linejoin="round" stroke-linecap="round"><path d="M3 11.7V6.8c0-7.8 7-7.8 7 0v4.9M1.3 11.9h10.5l-1.8-2.4M1.3 11.9l1.7-2.4M4.8 12.8c0 3.2 3.5 3.2 3.5 0"/></svg>
<svg class="b" style="left:15px;top:413.5px" width="13.5" height="16" viewBox="0 0 13.5 16" fill="none" stroke="#9caab2" stroke-width="1.2" stroke-linejoin="round" stroke-linecap="round"><path d="M2.5 7.7A5.2 6.7 0 1 1 3.8 12.6"/><path d="M.4 6.6h4.3L2.6 9.7z" fill="#9caab2" stroke="none"/><path d="M7.4 4.3v4.1l1.6 1.5"/></svg>
<svg class="b" style="left:15px;top:445px" width="13.5" height="16" viewBox="0 0 13.5 16" fill="none" stroke="#9caab2" stroke-width="1.2" stroke-linejoin="round" stroke-linecap="round"><path d="M3.3 11.8C-.2 11 .2 6.3 3 6 3.3.3 9.3.3 9.8 4.4c1.5.3 2.3 1.6 2.3 3"/><ellipse cx="7.8" cy="10.3" rx="2.5" ry="1.4"/><path d="M5.3 10.3v3.3c0 1.8 5 1.8 5 0v-3.3M5.3 12c0 1.6 5 1.6 5 0"/></svg>
<svg class="b" style="left:15px;top:521.3px" width="13.5" height="13.5" viewBox="0 0 13.5 13.5" fill="none" stroke="#9caab2" stroke-width="1.2" stroke-linejoin="round" stroke-linecap="round"><path d="M1.3 2.3l1 1.2L4.2.9M1.3 6.8l1 1.2 1.9-2.6M6.2 2.4h5.6M6.2 6.9h5.6M1.3 11.9h10.5"/></svg>
<svg class="b" style="left:15px;top:548.5px" width="13.5" height="17" viewBox="0 0 13.5 17" fill="none" stroke="#9caab2" stroke-width="1.2" stroke-linejoin="round" stroke-linecap="round"><ellipse cx="3" cy="3" rx="1.8" ry="2.1"/><ellipse cx="3" cy="8.5" rx="1.8" ry="2.1"/><ellipse cx="3" cy="14" rx="1.8" ry="2.1"/><path d="M4.8 3c1.5 0 1.8 5.5 3 5.5M4.8 14c1.5 0 1.8-5.5 3-5.5M4.8 8.5h3"/><path d="M8.3 1.8h3.3v13.4H8.3M9 8.5h2.5"/></svg>
<svg class="b" style="left:15px;top:579.7px" width="13.5" height="15.5" viewBox="0 0 13.5 15.5" fill="none" stroke="#9caab2" stroke-width="1.2" stroke-linejoin="round" stroke-linecap="round"><path d="M1.3 4.3V2c0-.7.4-1.1 1.1-1.1h1.4c3.4 0 3.6 2.6 3.6 4.6v4.6c0 1.3.5 1.9 1.7 1.9h2.6v2.6H8.3c-3.4 0-4.2-1.8-4.2-4.6V5.6c0-1-.4-1.3-1.2-1.3zM9 12v2.6"/></svg>
<svg class="b" style="left:15px;top:655px" width="13.5" height="15.5" viewBox="0 0 13.5 15.5" fill="none" stroke="#9caab2" stroke-width="1.2" stroke-linejoin="round" stroke-linecap="round"><rect x="1.3" y="3.8" width="10.5" height="10.9" rx="1.5"/><path d="M6.5 1v2.8M4.2 8v1M8.8 8v1M4.4 11.8h4.3"/></svg>
<svg class="b" style="left:15px;top:685px" width="13.5" height="16" viewBox="0 0 13.5 16" fill="none" stroke="#9caab2" stroke-width="1.2" stroke-linejoin="round" stroke-linecap="round"><path d="M4.3 1h4.4M5 1v6.2L1.9 12.8c-.5 1 .1 2 1.2 2h6.8c1.1 0 1.7-1 1.2-2L8 7.2V1M3 11h7"/></svg>
</body></html>
